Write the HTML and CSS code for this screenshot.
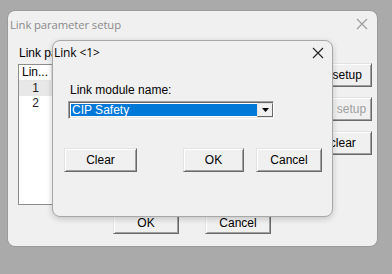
FILE: index.html
```html
<!DOCTYPE html>
<html lang="en">
<head>
  <meta charset="UTF-8" />
  <title>Link parameter setup</title>
  <link rel="stylesheet" href="styles.css">
</head>
<body>
  <div class="window main-window">
    <div class="titlebar">
      <span class="title">Link parameter setup</span>
      <svg class="close" width="12" height="12" viewBox="0 0 12 12"><path d="M1 1 L11 11 M11 1 L1 11" /></svg>
    </div>
    <div class="main-body">
      <div class="top-row">
        <div class="list-area">
          <div class="label">Link parameter</div>
          <div class="listbox">
            <div class="list-head">
              <span class="col-no">Lin...</span>
            </div>
            <div class="list-row selected"><span class="col-no">1</span></div>
            <div class="list-row"><span class="col-no">2</span></div>
          </div>
        </div>
        <div class="side-buttons">
          <button class="btn side-btn">Link setup</button>
          <button class="btn side-btn" disabled>Detail setup</button>
          <button class="btn side-btn">All clear</button>
        </div>
      </div>
      <div class="bottom-row">
        <button class="btn wide-btn">OK</button>
        <button class="btn wide-btn">Cancel</button>
      </div>
    </div>
  </div>

  <div class="window dialog">
    <div class="titlebar dialog-titlebar">
      <span class="title">Link &lt;1&gt;</span>
      <svg class="close" width="12" height="12" viewBox="0 0 12 12"><path d="M1 1 L11 11 M11 1 L1 11" /></svg>
    </div>
    <div class="dialog-body">
      <div class="field-label">Link module name:</div>
      <div class="combo">
        <div class="combo-value">CIP Safety</div>
        <div class="combo-arrow">
          <svg width="7" height="4" viewBox="0 0 7 4"><path d="M0 0 H7 L3.5 4 Z" /></svg>
        </div>
      </div>
      <div class="dialog-buttons">
        <button class="btn clear-btn">Clear</button>
        <div class="right-buttons">
          <button class="btn ok-btn">OK</button>
          <button class="btn cancel-btn">Cancel</button>
        </div>
      </div>
    </div>
  </div>
</body>
</html>
```

FILE: styles.css
```css
body {
  margin: 0;
  width: 392px;
  height: 274px;
  background: #aaaaaa;
  font-family: "Liberation Sans", Arial, sans-serif;
  font-size: 12px;
  color: #000;
  position: relative;
  overflow: hidden;
}
.window {
  position: absolute;
  background: #f0f0f0;
  box-sizing: border-box;
  border-radius: 8px;
  display: flex;
  flex-direction: column;
}
.main-window {
  left: 7px;
  top: 10px;
  width: 371px;
  height: 237px;
  border: 1px solid #9a9a9a;
}
.titlebar {
  display: flex;
  align-items: center;
  justify-content: space-between;
  height: 26px;
  padding: 0 9px 0 2px;
  flex-shrink: 0;
}
.title {
  font-family: "Open Sans", "Liberation Sans", sans-serif;
  font-size: 12px;
  letter-spacing: -0.1px;
}
.main-window .title {
  color: #8a8a8a;
  font-size: 11.3px;
}
.close path {
  stroke: #222;
  stroke-width: 1.1;
  fill: none;
}
.main-window .close path {
  stroke: #9a9a9a;
}
.main-body {
  display: flex;
  flex-direction: column;
  padding: 9px 5px 0 10px;
}
.top-row {
  display: flex;
  justify-content: space-between;
}
.list-area {
  display: flex;
  flex-direction: column;
}
.label {
  line-height: 14px;
  height: 14px;
  padding-left: 1px;
  white-space: nowrap;
}
.listbox {
  margin-top: 4px;
  width: 268px;
  height: 141px;
  box-sizing: border-box;
  background: #fff;
  border: 1px solid #8c8c8c;
}
.list-head {
  display: flex;
  height: 15px;
  line-height: 15px;
  border-bottom: 1px solid #e5e5e5;
}
.list-head .col-no {
  border-right: 1px solid #e5e5e5;
  padding-left: 3px;
  box-sizing: border-box;
}
.col-no {
  width: 33px;
  flex-shrink: 0;
}
.list-row {
  display: flex;
  height: 15px;
  line-height: 15px;
}
.list-row .col-no {
  text-align: center;
  color: #222;
}
.list-row.selected .col-no {
  background: #e8e8e8;
}
.side-buttons {
  display: flex;
  flex-direction: column;
  gap: 10px;
  margin-top: 17px;
}
.btn {
  font-family: "Liberation Sans", Arial, sans-serif;
  font-size: 12px;
  color: #000;
  background: #f0f0f0;
  border: 1px solid;
  border-color: #e3e3e3 #696969 #696969 #e3e3e3;
  box-shadow: inset 1px 1px 0 #fff, inset -1px -1px 0 #a0a0a0;
  padding: 0;
  box-sizing: border-box;
}
.btn:disabled {
  color: #a0a0a0;
}
.side-btn {
  width: 75px;
  height: 24px;
}
.bottom-row {
  display: flex;
  gap: 26px;
  margin: 6px 0 0 95px;
}
.wide-btn {
  width: 66px;
  height: 23px;
}
.dialog {
  left: 52px;
  top: 40px;
  width: 281px;
  height: 177px;
  border: 1px solid #a8a8a8;
  box-shadow: 0 2px 6px rgba(0, 0, 0, 0.18);
}
.dialog-titlebar {
  height: 23px;
  padding: 0 8px 0 1px;
}
.dialog-body {
  display: flex;
  flex-direction: column;
  padding: 19px 0 0 11px;
}
.field-label {
  padding-left: 6px;
  line-height: 14px;
}
.combo {
  display: flex;
  margin: 4px 0 0 4px;
  width: 206px;
  height: 18px;
  box-sizing: border-box;
  border: 1px solid;
  border-color: #a0a0a0 #fff #fff #a0a0a0;
  box-shadow: inset 1px 1px 0 #696969, inset -1px -1px 0 #e3e3e3;
  background: #fff;
  padding: 2px 1px 2px 2px;
}
.combo-value {
  flex: 1;
  background: #0078d7;
  color: #fff;
  line-height: 12px;
  padding-left: 1px;
}
.combo-arrow {
  width: 16px;
  display: flex;
  align-items: center;
  justify-content: center;
  background: #f0f0f0;
  margin: -1px -1px -1px 0;
  box-sizing: border-box;
  border: 1px solid;
  border-color: #e3e3e3 #696969 #696969 #e3e3e3;
}
.combo-arrow path {
  fill: #000;
}
.dialog-buttons {
  display: flex;
  margin-top: 29px;
}
.clear-btn {
  width: 73px;
  height: 24px;
}
.right-buttons {
  display: flex;
  gap: 12px;
  margin-left: 46px;
}
.ok-btn {
  width: 61px;
  height: 24px;
}
.cancel-btn {
  width: 66px;
  height: 24px;
}
```
